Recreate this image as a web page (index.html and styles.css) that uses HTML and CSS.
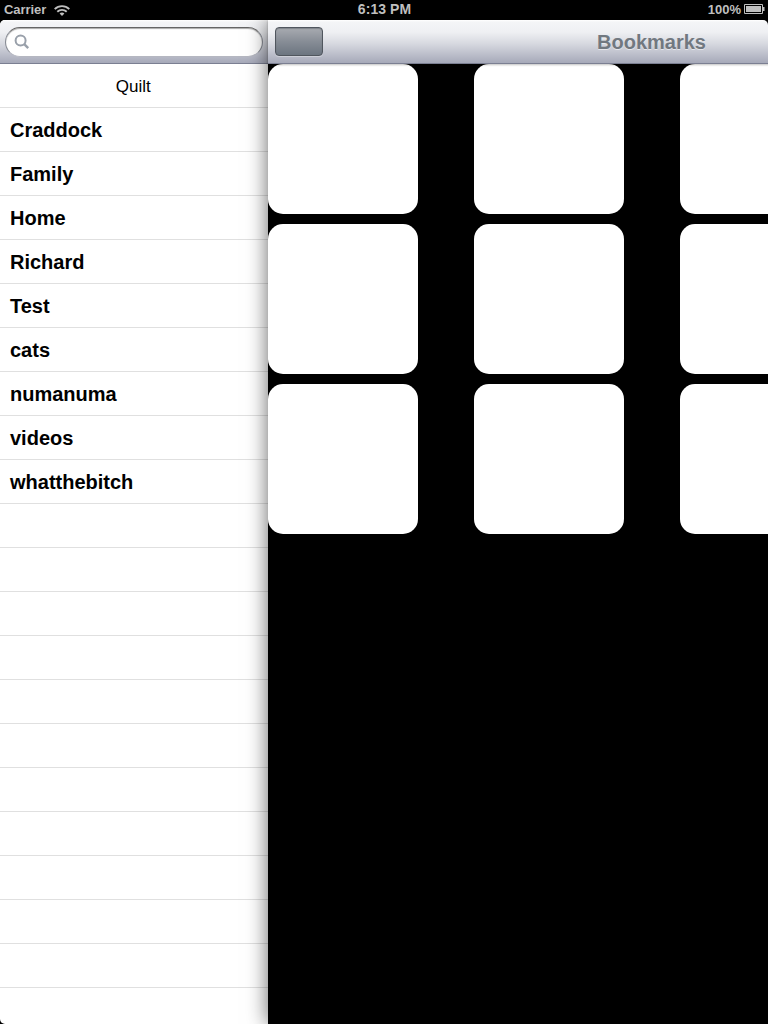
FILE: index.html
```html
<!DOCTYPE html>
<html lang="en">
<head>
<meta charset="utf-8">
<title>Bookmarks</title>
<link rel="stylesheet" href="styles.css">
</head>
<body>
<div class="screen">
  <header class="status">
    <div class="carrier"><span class="carrier-name">Carrier</span>
      <svg class="wifi" width="16" height="11" viewBox="0 0 16 11" fill="none" stroke="#bfbfbf" stroke-width="1.9">
        <path d="M.7 4.1C4.8.1 11.2.1 15.3 4.1"/><path d="M3.3 6.7c2.6-2.5 6.8-2.5 9.4 0"/><path d="M5.6 8.5c1.3-1.2 3.5-1.2 4.8 0L8 10.9z" fill="#bfbfbf" stroke="none"/>
      </svg>
    </div>
    <div class="clock">6:13 PM</div>
    <div class="power"><span class="percent">100%</span>
      <svg class="battery" width="21" height="10" viewBox="0 0 21 10"><path d="M.5.5h18v9H.5z" fill="none" stroke="#bfbfbf"/><path d="M2 2h15v6H2zM19 3h1.5v4H19z" fill="#bfbfbf"/></svg>
    </div>
  </header>
  <main class="split">
    <aside class="sidebar">
      <div class="bar search-bar">
        <div class="search">
          <svg width="16" height="16" viewBox="0 0 16 16" fill="none" stroke="#99a0aa" stroke-width="2"><circle cx="6.6" cy="6.6" r="5"/><path d="M10.2 10.2l4 4" stroke-width="2.4"/></svg>
        </div>
      </div>
      <ul class="list">
        <li class="row heading">Quilt</li>
        <li class="row">Craddock</li><li class="row">Family</li><li class="row">Home</li><li class="row">Richard</li><li class="row">Test</li><li class="row">cats</li><li class="row">numanuma</li><li class="row">videos</li><li class="row">whatthebitch</li>
        <li class="row"></li><li class="row"></li><li class="row"></li><li class="row"></li><li class="row"></li><li class="row"></li><li class="row"></li><li class="row"></li><li class="row"></li><li class="row"></li><li class="row"></li><li class="row"></li>
      </ul>
    </aside>
    <section class="detail">
      <div class="bar nav-bar"><div class="button"></div><h1 class="title">Bookmarks</h1><div class="balance"></div></div>
      <div class="grid">
        <div class="tile"></div><div class="tile"></div><div class="tile"></div>
        <div class="tile"></div><div class="tile"></div><div class="tile"></div>
        <div class="tile"></div><div class="tile"></div><div class="tile"></div>
      </div>
    </section>
  </main>
</div>
</body>
</html>
```
FILE: styles.css
```css
* { box-sizing: border-box; }
body { margin: 0; background: #000; font-family: "Liberation Sans", Arial, sans-serif; }
.screen { width: 768px; height: 1024px; display: flex; flex-direction: column; overflow: hidden; background: #000; }
.status { height: 20px; flex: none; display: grid; grid-template-columns: 1fr auto 1fr; align-items: center; padding: 0 3px 0 4px; color: #bfbfbf; font-size: 13px; font-weight: bold; line-height: 20px; }
.carrier { display: flex; align-items: center; gap: 8px; }
.carrier-name { width: 42px; letter-spacing: -.05px; }
.wifi { margin-top: 1px; }
.clock { font-size: 14px; line-height: 18px; padding-bottom: 2px; letter-spacing: .05px; }
.power { display: flex; align-items: center; justify-content: flex-end; gap: 3px; }
.battery { margin-top: -2px; }
.split { flex: none; height: 1004px; display: flex; overflow: hidden; border-radius: 5px; }
.sidebar { width: 268px; flex: none; background: #fff; overflow: hidden; }
.bar { height: 44px; border-bottom: 1px solid #7b7f92; background: linear-gradient(#fff 0, #f4f5f7 2px, #eff0f3 12px, #d6d8df 24px, #a6a9b9 43px); }
.search-bar { padding: 7px 5px; }
.search { height: 30px; width: 258px; padding: 6px 8px; border: 1px solid #858992; border-top-color: #656565; border-bottom-color: #b5b7c1; border-radius: 15px; background: #fff; box-shadow: inset 0 1px 1px #aaa; }
.search svg { display: block; }
.list { list-style: none; margin: 0; padding: 0; }
.row { height: 44px; border-bottom: 1px solid #e0e0e0; padding: 0 10px; font-size: 20px; font-weight: bold; line-height: 45px; color: #000; }
.heading { padding-right: 11.5px; font-size: 17px; font-weight: normal; text-align: center; }
.detail { position: relative; width: 768px; flex: none; background: #000; box-shadow: 0 0 20px rgba(0,0,0,.6); }
.nav-bar { position: relative; display: flex; align-items: center; padding: 0 8px 0 7px; box-shadow: 0 1px 2px rgba(0,0,0,.25); }
.button, .balance { width: 48px; height: 29px; flex: none; }
.button { border: 1px solid #50565e; border-radius: 4px; background: linear-gradient(#a8abb1, #878d96 50%, #6c7580); box-shadow: inset 0 1px 1px rgba(60,65,72,.35), 0 1px 0 rgba(255,255,255,.3); }
.title { flex: 1; margin: 0; text-align: center; font-size: 20px; line-height: 44px; color: #717880; text-shadow: 0 1px 0 rgba(255,255,255,.5); }
.grid { display: grid; grid-template-columns: repeat(3, 150px); column-gap: 56px; row-gap: 10px; }
.tile { height: 150px; border-radius: 15px; background: #fff; }
```
